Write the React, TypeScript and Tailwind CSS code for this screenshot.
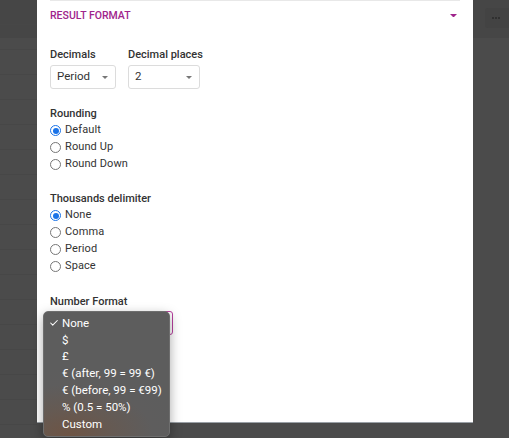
import { Check } from "lucide-react"

function Caret({ className = "", w = 8 }: { className?: string; w?: number }) {
  return (
    <svg width={w} height={w / 2} viewBox="0 0 8 4" className={className}>
      <path d="M0 0h8L4 4z" fill="currentColor" />
    </svg>
  )
}

function Radio({ label, checked = false }: { label: string; checked?: boolean }) {
  return (
    <div className="flex h-[17px] items-center gap-[4px]">
      {checked ? (
        <span className="flex h-[11px] w-[11px] items-center justify-center rounded-full border border-[#1a73e8] bg-white">
          <span className="h-[6px] w-[6px] rounded-full bg-[#1a73e8]" />
        </span>
      ) : (
        <span className="h-[11px] w-[11px] rounded-full border border-[#767676] bg-white" />
      )}
      <span className="text-[11px] tracking-[0.1px] text-[#333]">{label}</span>
    </div>
  )
}

function Select({ value, width }: { value: string; width: string }) {
  return (
    <div className={`flex h-[24px] items-center justify-between rounded-[3px] border border-[#dcdcdc] bg-white pl-[6px] pr-[7px] ${width}`}>
      <span className="text-[11.5px] text-[#333]">{value}</span>
      <Caret className="text-[#777]" w={6} />
    </div>
  )
}

const formats = ["None", "$", "£", "€ (after, 99 = 99 €)", "€ (before, 99 = €99)", "% (0.5 = 50%)", "Custom"]

export default function App() {
  return (
    <div
      className="relative h-[438px] w-[509px] overflow-hidden bg-[#4b4b4b]"
      style={{ fontFamily: 'Roboto, "Noto Sans", sans-serif' }}
    >
      {/* background rows */}
      <div className="absolute inset-x-0 top-0 h-[38px] bg-[#464646]" />
      <div className="absolute left-0 top-0 flex w-[37px] flex-col">
        {Array.from({ length: 18 }).map((_, i) => (
          <div key={i} className="h-[25px] border-b border-[#474747]" />
        ))}
      </div>
      <div className="absolute left-[485px] top-[8px] flex h-[20px] w-[24px] items-center justify-center gap-[1.5px] rounded-l-[3px] bg-[#434343] pr-[2px]">
        <span className="h-[1.5px] w-[1.5px] rounded-full bg-[#2a2a2a]" />
        <span className="h-[1.5px] w-[1.5px] rounded-full bg-[#2a2a2a]" />
        <span className="h-[1.5px] w-[1.5px] rounded-full bg-[#2a2a2a]" />
      </div>

      {/* panel */}
      <div className="absolute left-[37px] top-0 h-[423px] w-[436px] border-b border-[#9aa0a6] bg-white px-[13px]">
        <div className="h-px bg-[#e8e8e8]" />
        <div className="flex h-[29px] items-center justify-between pr-[3px]">
          <span className="text-[10.5px] font-medium text-[#a0248c]">RESULT FORMAT</span>
          <Caret className="text-[#a0248c]" w={7} />
        </div>

        <div className="mt-[16px] flex gap-[12px]">
          <div className="flex flex-col gap-[2px]">
            <span className="text-[11px] font-medium leading-[17px] text-[#333]">Decimals</span>
            <Select value="Period" width="w-[66px]" />
          </div>
          <div className="flex flex-col gap-[2px]">
            <span className="text-[11px] font-medium leading-[17px] text-[#333]">Decimal places</span>
            <Select value="2" width="w-[72px]" />
          </div>
        </div>

        <div className="mt-[16px] text-[11px] font-medium leading-[17px] text-[#333]">Rounding</div>
        <div className="flex flex-col">
          <Radio label="Default" checked />
          <Radio label="Round Up" />
          <Radio label="Round Down" />
        </div>

        <div className="mt-[17px] text-[11px] font-medium leading-[17px] text-[#333]">Thousands delimiter</div>
        <div className="flex flex-col">
          <Radio label="None" checked />
          <Radio label="Comma" />
          <Radio label="Period" />
          <Radio label="Space" />
        </div>

        <div className="mt-[18px] text-[11px] font-medium leading-[17px] text-[#333]">Number Format</div>
        <div className="mt-[1px] h-[24px] w-[123px] rounded-[3px] border border-[#b8409f] bg-white" />
      </div>

      {/* dropdown menu */}
      <div
        className="absolute left-[43px] top-[311px] w-[127px] overflow-hidden rounded-[5px] border border-[#6e6e6e] py-[3px] shadow-[0_4px_12px_rgba(0,0,0,0.35)]"
        style={{ background: "radial-gradient(ellipse 90% 55% at 20% 100%, #6e5444 0%, #655a53 40%, #5e5d5d 75%, #5d5d5d 100%)" }}
      >
        {formats.map((f, i) => (
          <div key={f} className="flex h-[16.8px] items-center text-[11.5px] text-white">
            <span className="flex w-[17px] justify-end pr-[2px]">
              {i === 0 && <Check size={10} strokeWidth={2.5} />}
            </span>
            <span className="pl-[1px]">{f}</span>
          </div>
        ))}
      </div>
    </div>
  )
}
